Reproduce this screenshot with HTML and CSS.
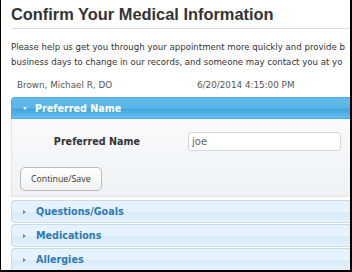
FILE: index.html
```html
<!DOCTYPE html>
<html lang="en">
<head>
    <meta charset="UTF-8">
    <meta name="viewport" content="width=device-width, initial-scale=1.0">
    <title>Confirm Your Medical Information</title>
    <link rel="stylesheet" href="styles.css">
</head>
<body>
    <div class="frame">
        <h1>Confirm Your Medical Information</h1>
        <p class="intro">Please help us get you through your appointment more quickly and provide b<br>business days to change in our records, and someone may contact you at yo</p>

        <div class="visit">
            <span class="provider">Brown, Michael R, DO</span>
            <span class="date">6/20/2014 4:15:00 PM</span>
        </div>

        <div class="accordion">
            <div class="panel open">
                <div class="panel-head">
                    <span class="arrow down"></span>
                    Preferred Name
                </div>
                <div class="panel-body">
                    <div class="field">
                        <label for="pref-name">Preferred Name</label>
                        <input type="text" id="pref-name" value="joe">
                    </div>
                    <button type="button">Continue/Save</button>
                </div>
            </div>
            <div class="panel">
                <div class="panel-head"><span class="arrow"></span>Questions/Goals</div>
            </div>
            <div class="panel">
                <div class="panel-head"><span class="arrow"></span>Medications</div>
            </div>
            <div class="panel">
                <div class="panel-head"><span class="arrow"></span>Allergies</div>
            </div>
        </div>
    </div>
</body>
</html>
```
FILE: styles.css
```css
body {
    margin: 0;
    background: #000;
}

.frame {
    width: 349px;
    height: 270px;
    margin-left: 1px;
    background: #fff;
    overflow: hidden;
    font-family: "DejaVu Sans", Verdana, sans-serif;
    color: #333;
}

h1 {
    margin: 0 0 0 10px;
    padding: 5px 0 4px;
    font-family: "Liberation Sans", Arial, sans-serif;
    font-size: 16.4px;
    font-weight: bold;
    color: #333;
    border-bottom: 1px solid #ddd;
    white-space: nowrap;
}

.intro {
    margin: 11px 0 0 10px;
    font-size: 8.6px;
    line-height: 15px;
    white-space: nowrap;
    color: #333;
}

.visit {
    display: flex;
    margin: 9px 0 0 16px;
    font-size: 8.8px;
    line-height: 12px;
    color: #555;
}

.visit .provider {
    width: 180px;
}

.accordion {
    margin: 6px 0 0 10px;
}

.panel-head {
    display: flex;
    align-items: center;
    height: 21px;
    padding-left: 11px;
    font-size: 9.6px;
    font-weight: bold;
    color: #2d7ab6;
    background: linear-gradient(#e6f3fc, #e6f3fc 50%, #d8ebf9 55%, #e3f1fb);
    border: 1px solid #c6dcee;
    border-right: none;
    border-radius: 4px 0 0 4px;
    margin-bottom: 1px;
}

.open .panel-head {
    height: 20px;
    color: #fff;
    background: linear-gradient(#62bbea, #5ab6e7 50%, #3ea6df 55%, #67bdea);
    border-color: #4aaee2;
    border-radius: 4px 0 0 0;
    margin-bottom: 0;
}

.arrow {
    width: 0;
    height: 0;
    margin-right: 10px;
    border-top: 2px solid transparent;
    border-bottom: 2px solid transparent;
    border-left: 3px solid #4a8fc4;
}

.arrow.down {
    border-left: 2.5px solid transparent;
    border-right: 2.5px solid transparent;
    border-top: 3px solid #fff;
    border-bottom: none;
    margin-right: 8px;
}

.panel-body {
    background: linear-gradient(#f9fafc, #eef2f5);
    border: 1px solid #e2e6ea;
    border-top: none;
    border-right: none;
    padding: 13px 8px 5px;
    margin-bottom: 3px;
}

.field {
    display: flex;
    align-items: center;
    margin-bottom: 16px;
}

.field label {
    width: 120px;
    text-align: right;
    padding-right: 48px;
    font-size: 9.6px;
    font-weight: bold;
    color: #333;
}

.field input {
    width: 153px;
    height: 19px;
    padding: 0 3px;
    border: 1px solid #d6d9dc;
    border-radius: 3px;
    box-sizing: border-box;
    font-family: "DejaVu Sans", Verdana, sans-serif;
    font-size: 10px;
    color: #666;
}

button {
    padding: 0 10px;
    height: 24px;
    font-family: "Open Sans", sans-serif;
    font-size: 8.8px;
    color: #333;
    background: linear-gradient(#fff, #f1f1f1);
    border: 1px solid #bbb;
    border-radius: 5px;
    cursor: pointer;
}
```
